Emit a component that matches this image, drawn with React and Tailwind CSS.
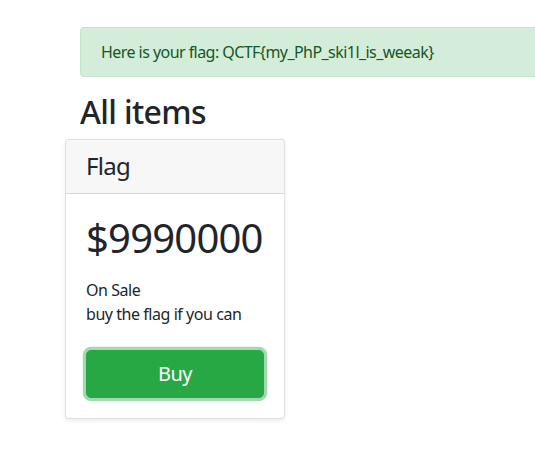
export default function App() {
  return (
    <div
      className="w-[535px] h-[459px] overflow-hidden bg-white text-[#212529] text-[16px] leading-[1.5] tracking-[-0.45px]"
      style={{ fontFamily: '"Noto Sans", "Open Sans", sans-serif' }}
    >
      <div className="pt-[27px] pl-[80px]">
        <div className="w-[520px] rounded-[4px] border border-[#c3e6cb] bg-[#d4edda] px-[20px] py-[12px] text-[#155724] mb-[16px] whitespace-nowrap tracking-[-0.55px]">
          Here is your flag: QCTF{"{"}my_PhP_ski1l_is_weeak{"}"}
        </div>
        <h2 className="text-[32px] font-medium leading-[1.2] mb-[8px] tracking-[-0.65px]">All items</h2>
        <div className="-ml-[15px] w-[220px] rounded-[4px] border border-[rgba(0,0,0,0.125)] bg-white shadow-[0_2px_4px_rgba(0,0,0,0.075)]">
          <div className="border-b border-[rgba(0,0,0,0.125)] bg-[rgba(0,0,0,0.03)] px-[20px] py-[12px] rounded-t-[3px]">
            <h4 className="text-[24px] font-normal leading-[1.2] tracking-[-0.7px]">Flag</h4>
          </div>
          <div className="p-[20px]">
            <h1 className="text-[40px] font-normal leading-[1.2] whitespace-nowrap tracking-[-0.8px]">$9990000</h1>
            <ul className="mt-[16px] mb-[24px]">
              <li>On Sale</li>
              <li>buy the flag if you can</li>
            </ul>
            <button className="block w-full rounded-[5px] border border-[#28a745] bg-[#28a745] px-[16px] py-[8px] text-[20px] leading-[1.5] text-white shadow-[0_0_0_3.2px_rgba(72,180,97,0.5)]">
              Buy
            </button>
          </div>
        </div>
      </div>
    </div>
  );
}
